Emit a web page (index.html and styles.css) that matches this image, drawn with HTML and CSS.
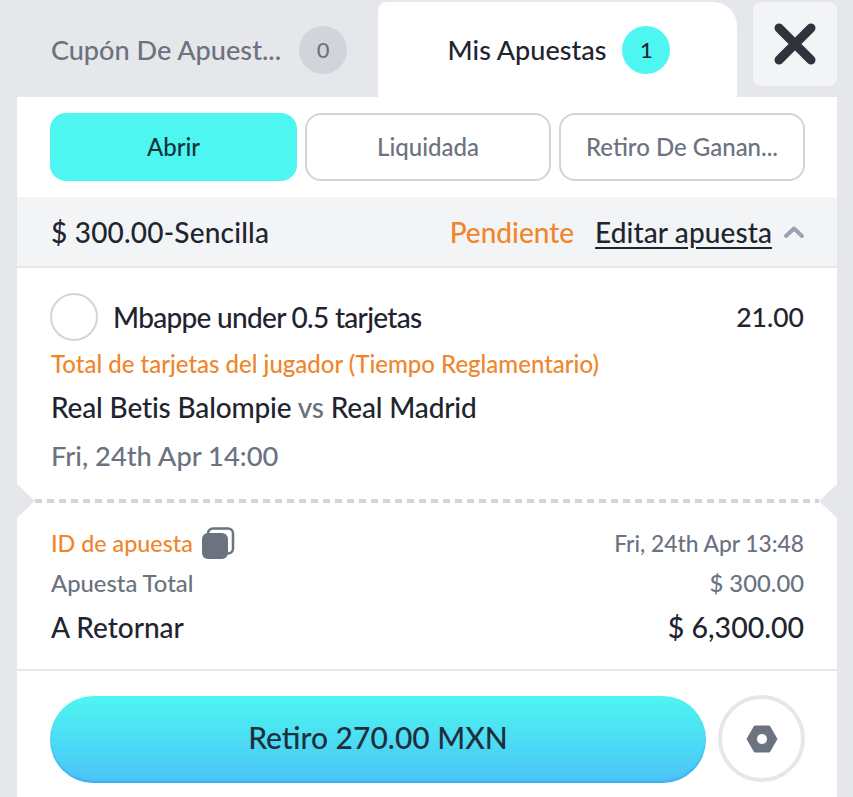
FILE: index.html
```html
<!doctype html>
<html lang="es">
  <head>
    <title>Mis Apuestas</title>
    <meta charset="UTF-8">
    <meta name="viewport" content="width=device-width, initial-scale=1">
    <link rel="stylesheet" href="styles.css">
  </head>
  <body>
<nav class="tabs">
  <div class="tab">
    <span class="tab-label">Cupón De Apuest...</span>
    <span class="count">0</span>
  </div>
  <div class="tab tab-active">
    <span class="tab-label">Mis Apuestas</span>
    <span class="count count-active">1</span>
  </div>
  <button class="close">
    <svg width="44" height="44" viewBox="0 0 44 44"><path d="M6 6 38 38M38 6 6 38" stroke="#2f343c" stroke-width="9" stroke-linecap="round"/></svg>
  </button>
</nav>
<main class="panel">
  <div class="filters">
    <div class="filter filter-active">Abrir</div>
    <div class="filter">Liquidada</div>
    <div class="filter">Retiro De Ganan...</div>
  </div>
  <header class="bet-head">
    <span class="stake">$ 300.00-Sencilla</span>
    <span class="status">Pendiente</span>
    <a class="edit">Editar apuesta</a>
    <svg class="chevron" width="22" height="14" viewBox="0 0 22 14"><path d="M3 11 11 3.5 19 11" fill="none" stroke="#9ca3af" stroke-width="4" stroke-linecap="round" stroke-linejoin="round"/></svg>
  </header>
  <section class="bet">
    <div class="row pick">
      <span class="radio"></span>
      <span class="pick-name">Mbappe under 0.5 tarjetas</span>
      <span class="odds">21.00</span>
    </div>
    <div class="market">Total de tarjetas del jugador (Tiempo Reglamentario)</div>
    <div class="teams">Real Betis Balompie <span class="vs">vs</span> Real Madrid</div>
    <div class="date">Fri, 24th Apr 14:00</div>
  </section>
  <div class="tear"></div>
  <section class="summary">
    <div class="row id-row">
      <span class="bet-id">ID de apuesta
        <svg width="34" height="33" viewBox="0 0 34 33"><rect x="7" y="1.500" width="25" height="25" rx="5" fill="none" stroke="#6b7280" stroke-width="2.500"/><rect x="1" y="6" width="26" height="26" rx="6" fill="#6b7280"/></svg>
      </span>
      <span class="placed">Fri, 24th Apr 13:48</span>
    </div>
    <div class="row total-row">
      <span>Apuesta Total</span>
      <span>$ 300.00</span>
    </div>
    <div class="row return-row">
      <span>A Retornar</span>
      <span class="return-value">$ 6,300.00</span>
    </div>
  </section>
  <footer class="actions">
    <button class="cashout">Retiro 270.00 MXN</button>
    <button class="settings">
      <svg width="34" height="30" viewBox="0 0 34 30"><path fill-rule="evenodd" d="M9.500 2h15L32 15l-7.500 13h-15L2 15ZM17 9.500a5.500 5.500 0 1 0 0 11 5.500 5.500 0 0 0 0-11Z" fill="#6b7280" stroke="#6b7280" stroke-width="1" stroke-linejoin="round"/></svg>
    </button>
  </footer>
</main>
  </body>
</html>
```

FILE: styles.css
```css
html, body {
  margin: 0;
  height: 797px;
  overflow: hidden;
  background: #e5e7eb;
  font-family: Lato, "Noto Sans", sans-serif;
  font-weight: 500;
  color: #1f2530;
}
body {
  padding: 0 16px 0 17px;
  box-sizing: border-box;
}
button {
  font-family: inherit;
  font-weight: inherit;
  padding: 0;
}

/* tabs */
.tabs {
  display: flex;
  height: 97px;
  padding-top: 2px;
  box-sizing: border-box;
}
.tab {
  flex: 0 0 361px;
  display: flex;
  align-items: center;
  justify-content: center;
  gap: 18px;
  font-size: 27.100px;
  color: #6b7280;
  padding-left: 3px;
  box-sizing: border-box;
}
.tab-active {
  flex: 0 0 359px;
  gap: 16px;
  font-size: 27px;
  background: #fff;
  color: #1f2530;
  border-radius: 8px 24px 0 0;
}
.count {
  width: 48px;
  height: 48px;
  border-radius: 50%;
  background: #d1d5db;
  display: flex;
  align-items: center;
  justify-content: center;
  font-size: 22px;
}
.count-active {
  background: #4df6f0;
}
.close {
  width: 84px;
  height: 84px;
  margin-left: 16px;
  border: 0;
  border-radius: 8px;
  background: #f3f4f6;
  display: flex;
  align-items: center;
  justify-content: center;
}

.panel {
  background: #fff;
  height: 700px;
}

/* filters */
.filters {
  display: grid;
  grid-template-columns: 247px 246px 246px;
  gap: 8px;
  padding: 16px 32px 16px 33px;
}
.filter {
  height: 68px;
  padding-bottom: 2px;
  border: 2px solid #d1d5db;
  border-radius: 16px;
  box-sizing: border-box;
  display: flex;
  align-items: center;
  justify-content: center;
  font-size: 24px;
  color: #6b7280;
}
.filter-active {
  background: #4df6f0;
  border: 0;
  color: #12343a;
}

/* bet header */
.bet-head {
  display: flex;
  align-items: center;
  height: 71px;
  padding: 0 32px 0 34px;
  box-sizing: border-box;
  background: #f3f4f6;
  border-bottom: 2px solid #e5e7eb;
  font-size: 28px;
}
.stake {
  flex: 1;
  letter-spacing: 0.2px;
}
.status {
  color: #f0862c;
  margin-right: 21px;
}
.edit {
  text-decoration: underline;
  text-underline-offset: 4px;
  margin-right: 11px;
  letter-spacing: 0.100px;
}

/* bet details */
.bet {
  padding: 25px 33px 0 34px;
  height: 231px;
  box-sizing: border-box;
}
.row {
  display: flex;
  align-items: center;
  justify-content: space-between;
}
.pick {
  height: 48px;
  font-size: 28px;
}
.radio {
  width: 48px;
  height: 48px;
  border: 2px solid #d1d5db;
  border-radius: 50%;
  box-sizing: border-box;
  margin: 0 15px 0 -1px;
}
.pick-name {
  flex: 1;
  letter-spacing: -0.700px;
}
.odds {
  font-size: 26.500px;
}
.market {
  margin-top: 8px;
  font-size: 24px;
  line-height: 30px;
  color: #f0862c;
}
.teams {
  margin-top: 12px;
  font-size: 28px;
  line-height: 32px;
  letter-spacing: -0.150px;
}
.vs {
  color: #6b7280;
}
.date {
  margin-top: 17px;
  font-size: 27.300px;
  line-height: 32px;
  color: #6b7280;
}

/* perforated line */
.tear {
  height: 4px;
  margin: 0 18px;
  background: repeating-linear-gradient(90deg, #d1d5db 0 7px, transparent 7px 12px);
  position: relative;
}
.tear::before, .tear::after {
  content: "";
  position: absolute;
  top: -15px;
  border: 17px solid transparent;
  border-width: 17px 18px;
}
.tear::before {
  left: -18px;
  border-left-color: #e5e7eb;
  border-right-width: 0;
}
.tear::after {
  right: -18px;
  border-right-color: #e5e7eb;
  border-left-width: 0;
}

/* summary */
.summary {
  padding: 24px 33px 0 34px;
  height: 168px;
  box-sizing: border-box;
  border-bottom: 2px solid #e5e7eb;
}
.id-row {
  height: 32px;
}
.bet-id {
  display: flex;
  align-items: center;
  gap: 8px;
  font-size: 23.300px;
  color: #f0862c;
}
.placed {
  font-size: 22.800px;
  color: #6b7280;
}
.total-row {
  margin-top: 8px;
  height: 32px;
  font-size: 23.800px;
  color: #6b7280;
}
.return-row {
  margin-top: 12px;
  height: 32px;
  font-size: 28px;
}
.return-value {
  font-size: 28.500px;
}

/* footer */
.actions {
  display: flex;
  align-items: flex-start;
  gap: 12px;
  padding: 25px 32px 0 33px;
}
.cashout {
  flex: 1;
  height: 87px;
  padding-bottom: 6px;
  border: 0;
  border-radius: 44px;
  background: linear-gradient(180deg, #4df6f0, #4bc3f7);
  box-shadow: inset 0 -2px 2px rgba(40, 130, 220, 0.35);
  font-size: 30px;
  color: #1f2f3a;
}
.settings {
  width: 87px;
  height: 87px;
  margin-top: -1px;
  border: 4px solid #e5e7eb;
  border-radius: 50%;
  background: #fff;
  display: flex;
  align-items: center;
  justify-content: center;
}
```
